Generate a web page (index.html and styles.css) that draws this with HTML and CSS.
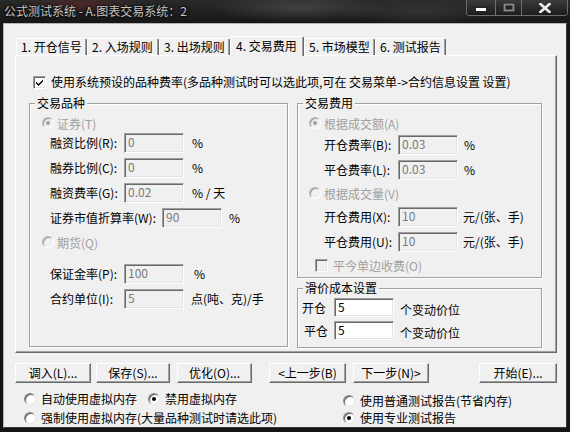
FILE: index.html
```html
<!DOCTYPE html>
<html lang="zh">
<head>
<meta charset="utf-8">
<title>公式测试系统</title>
<link rel="stylesheet" href="styles.css">
</head>
<body>
<div class="window">
  <div class="titlebar">
    <span class="title">公式测试系统 - A.图表交易系统：2</span>
    <div class="caption-btns">
      <span class="cap cap-min"><svg width="12" height="5" viewBox="0 0 12 5"><rect x="0.5" y="0.5" width="11" height="4" fill="#fff" stroke="#222"/></svg></span>
      <span class="cap cap-max"><svg width="12" height="9" viewBox="0 0 12 9"><rect x="0.5" y="0.5" width="11" height="8" fill="#222" stroke="#111"/><rect x="1.5" y="1.5" width="9" height="6" fill="none" stroke="#8a8a8a" stroke-width="2"/></svg></span>
      <span class="cap cap-close"><svg width="12" height="10" viewBox="0 0 12 10"><path d="M1.5 1 L10.5 9 M10.5 1 L1.5 9" stroke="#eaeaea" stroke-width="2.6" stroke-linecap="square"/></svg></span>
    </div>
  </div>
  <div class="client">
    <div class="tabs">
      <div class="tab t71">1. 开仓信号</div>
      <div class="tab t72">2. 入场规则</div>
      <div class="tab t71">3. 出场规则</div>
      <div class="tab sel">4. 交易费用</div>
      <div class="tab t71">5. 市场模型</div>
      <div class="tab t71">6. 测试报告</div>
    </div>
    <div class="panel">
      <div class="check-row">
        <span class="checkbox"><svg width="9" height="9" viewBox="0 0 9 9"><path d="M1 3.5 L3.5 6 L8 1.5 L8 3.5 L3.5 8 L1 5.5 Z" fill="#000"/></svg></span>
        <span class="check-text">使用系统预设的品种费率(多品种测试时可以选此项,可在 交易菜单->合约信息设置 设置)</span>
      </div>
      <div class="groups">
        <div class="group group-left">
          <span class="group-title">交易品种</span>
          <div class="opt opt-a dis"><span class="radio dis on"></span><span class="opt-text">证券(T)</span></div>
          <div class="field f-l f1"><span class="lbl w74">融资比例(R):</span><span class="input dis">0</span><span class="unit u8">%</span></div>
          <div class="field f-l f2"><span class="lbl w74">融券比例(C):</span><span class="input dis">0</span><span class="unit u8">%</span></div>
          <div class="field f-l f2"><span class="lbl w74">融资费率(G):</span><span class="input dis">0.02</span><span class="unit u8">% / 天</span></div>
          <div class="field f-l f2"><span class="lbl w112">证券市值折算率(W):</span><span class="input dis">90</span><span class="unit u7">%</span></div>
          <div class="opt opt-b dis"><span class="radio dis"></span><span class="opt-text">期货(Q)</span></div>
          <div class="field f-l f5"><span class="lbl w74">保证金率(P):</span><span class="input dis">100</span><span class="unit u10">%</span></div>
          <div class="field f-l f2"><span class="lbl w74">合约单位(I):</span><span class="input dis">5</span><span class="unit u7">点(吨、克)/手</span></div>
        </div>
        <div class="right-col">
          <div class="group group-fee">
            <span class="group-title">交易费用</span>
            <div class="opt opt-r dis"><span class="radio dis on"></span><span class="opt-text">根据成交额(A)</span></div>
            <div class="field f-r r1"><span class="lbl w74">开仓费率(B):</span><span class="input dis">0.03</span><span class="unit u6">%</span></div>
            <div class="field f-r r2"><span class="lbl w74">平仓费率(L):</span><span class="input dis">0.03</span><span class="unit u6">%</span></div>
            <div class="opt opt-r opt-r2 dis"><span class="radio dis"></span><span class="opt-text">根据成交量(V)</span></div>
            <div class="field f-r r3"><span class="lbl w74">开仓费用(X):</span><span class="input dis">10</span><span class="unit u5">元/(张、手)</span></div>
            <div class="field f-r r2"><span class="lbl w74">平仓费用(U):</span><span class="input dis">10</span><span class="unit u5">元/(张、手)</span></div>
            <div class="opt opt-chk dis"><span class="checkbox dis"></span><span class="chk-text">平今单边收费(O)</span></div>
          </div>
          <div class="group group-slip">
            <span class="group-title">滑价成本设置</span>
            <div class="field s1"><span class="lbl w32">开仓</span><span class="input en">5</span><span class="unit u6">个变动价位</span></div>
            <div class="field s2"><span class="lbl w30">平仓</span><span class="input en">5</span><span class="unit u6">个变动价位</span></div>
          </div>
        </div>
      </div>
    </div>
    <div class="buttons">
      <span class="btn b1">调入(L)...</span>
      <span class="btn b2">保存(S)...</span>
      <span class="btn b3">优化(O)...</span>
      <span class="btn b4">&lt;上一步(B)</span>
      <span class="btn b5">下一步(N)&gt;</span>
      <span class="btn b6">开始(E)...</span>
    </div>
    <div class="bottom-opts">
      <div class="col-left">
        <div class="brow">
          <span class="radio"></span><span class="btext">自动使用虚拟内存</span>
          <span class="radio r-gap on"></span><span class="btext">禁用虚拟内存</span>
        </div>
        <div class="brow">
          <span class="radio"></span><span class="btext">强制使用虚拟内存(大量品种测试时请选此项)</span>
        </div>
      </div>
      <div class="col-right">
        <div class="brow">
          <span class="radio"></span><span class="btext">使用普通测试报告(节省内存)</span>
        </div>
        <div class="brow">
          <span class="radio on"></span><span class="btext">使用专业测试报告</span>
        </div>
      </div>
    </div>
  </div>
</div>
</body>
</html>
```

FILE: styles.css
```css
* { box-sizing: border-box; }
html, body { margin: 0; padding: 0; }
body {
  width: 570px;
  height: 432px;
  overflow: hidden;
  background: #111;
  font-family: "Noto Sans CJK SC", "Noto Sans", "Liberation Sans", sans-serif;
  font-size: 12px;
  color: #000;
}
.window {
  width: 570px;
  height: 432px;
  display: flex;
  flex-direction: column;
  background:
    radial-gradient(ellipse 90px 14px at 300px 8px, rgba(90,90,90,0.55), transparent),
    radial-gradient(ellipse 60px 10px at 80px 4px, rgba(120,40,40,0.45), transparent),
    radial-gradient(ellipse 80px 14px at 420px 12px, rgba(70,70,70,0.5), transparent),
    linear-gradient(#2a2a2a, #151515 24px, #141414);
}
.titlebar {
  height: 23px;
  display: flex;
  justify-content: space-between;
  align-items: flex-start;
  flex: none;
}
.title {
  margin: 3px 0 0 4px;
  line-height: 16px;
  color: #c6c6c6;
  font-size: 12px;
  text-shadow: 0 0 3px #000, 0 0 2px #000;
}
.caption-btns {
  display: flex;
  margin-right: 2px;
  height: 16px;
  border: 1px solid #6e6e6e;
  border-top: none;
  border-radius: 0 0 4px 4px;
  overflow: hidden;
}
.cap {
  height: 15px;
  display: flex;
  align-items: center;
  justify-content: center;
  background: linear-gradient(#3b3b3b, #1c1c1c);
}
.cap + .cap { border-left: 1px solid #6e6e6e; }
.cap-min { width: 28px; padding-top: 4px; }
.cap-max { width: 26px; }
.cap-close { width: 46px; }

.client {
  margin: 0 3px;
  height: 405px;
  flex: none;
  background: #f0f0f0;
  border: 1px solid;
  border-color: #b4b4b4 #3a3a3a #3a3a3a #b4b4b4;
  display: flex;
  flex-direction: column;
}

/* tabs */
.tabs {
  display: flex;
  align-items: flex-end;
  height: 19px;
  margin: 12px 0 0 12px;
  flex: none;
}
.tab {
  height: 17px;
  line-height: 16px;
  padding-left: 4px;
  border: 1px solid;
  border-bottom: none;
  border-color: #fff #696969 transparent #fff;
  box-shadow: inset -1px 0 #a0a0a0;
  border-radius: 2px 2px 0 0;
  white-space: nowrap;
  background: #f0f0f0;
}
.t71 { width: 71px; }
.t72 { width: 72px; }
.tab.sel {
  width: 74px;
  height: 20px;
  padding-left: 5px;
  line-height: 17px;
  margin-bottom: -1px;
  position: relative;
  z-index: 1;
}

/* panel */
.panel {
  margin-left: 11px;
  width: 542px;
  height: 298px;
  flex: none;
  border: 1px solid;
  border-color: #fff #696969 #696969 #fff;
  box-shadow: inset -1px -1px #a0a0a0;
  padding: 19px 0 0 13px;
}
.check-row {
  display: flex;
  align-items: center;
  height: 14px;
  margin-left: 4px;
}
.checkbox {
  width: 13px;
  height: 13px;
  flex: none;
  background: #fff;
  border: 1px solid;
  border-color: #a0a0a0 #fff #fff #a0a0a0;
  box-shadow: inset 1px 1px #696969, inset -1px -1px #e3e3e3;
  display: flex;
  align-items: center;
  justify-content: center;
}
.checkbox.dis { background: #f0f0f0; }
.check-text { margin-left: 5px; line-height: 14px; white-space: nowrap; }

.groups {
  display: flex;
  margin-top: 14px;
  gap: 9px;
}
.group {
  border: 1px solid #a0a0a0;
  box-shadow: inset 1px 1px #fff, 1px 1px #fff;
  display: flex;
  flex-direction: column;
}
.group-title {
  display: block;
  align-self: flex-start;
  margin: -8px 0 0 5px;
  padding: 0 2px;
  height: 14px;
  line-height: 14px;
  background: #f0f0f0;
  white-space: nowrap;
}
.group-left { width: 259px; height: 244px; }
.right-col { width: 245px; display: flex; flex-direction: column; }
.group-fee { height: 175px; }
.group-slip { height: 60px; margin-top: 10px; }

.opt {
  display: flex;
  align-items: center;
  height: 14px;
  flex: none;
}
.opt.dis { color: #a0a0a0; }
.opt-text { margin-left: 3px; white-space: nowrap; }
.opt-a { margin-top: 6px; padding-left: 12px; }
.opt-b { margin-top: 7px; padding-left: 12px; }
.opt-r { margin-top: 6px; padding-left: 11px; }
.opt-chk { margin-top: 6px; padding-left: 17px; }
.chk-text { margin-left: 5px; white-space: nowrap; }

.radio {
  width: 12px;
  height: 12px;
  flex: none;
  border-radius: 50%;
  background: #fff;
  border: 1px solid;
  border-color: #8a8a8a #e6e6e6 #e6e6e6 #8a8a8a;
  box-shadow: inset 1px 1px #5a5a5a;
  display: flex;
  align-items: center;
  justify-content: center;
}
.radio.on::after {
  content: "";
  width: 4px;
  height: 4px;
  border-radius: 50%;
  background: #000;
}
.radio.dis {
  background: #f0f0f0;
  border-color: #b8b8b8 #fff #fff #b8b8b8;
  box-shadow: inset 1px 1px #a0a0a0;
}
.radio.dis.on::after { background: #a0a0a0; }

.field {
  display: flex;
  align-items: center;
  height: 20px;
  flex: none;
}
.f-l { padding-left: 20px; }
.f1 { margin-top: 3px; }
.f2 { margin-top: 5px; }
.f5 { margin-top: 15px; }
.f-r { padding-left: 26px; }
.r1 { margin-top: 5px; }
.r2 { margin-top: 5px; }
.r3 { margin-top: 7px; }
.s1 { margin-top: 3px; padding-left: 4px; height: 19px; }
.s2 { margin-top: 4px; padding-left: 6px; height: 19px; }

.lbl { white-space: nowrap; flex: none; line-height: 14px; }
.w74 { width: 74px; }
.w112 { width: 112px; }
.w32 { width: 32px; }
.w30 { width: 30px; }

.input {
  width: 60px;
  height: 20px;
  flex: none;
  border: 1px solid;
  border-color: #a0a0a0 #fff #fff #a0a0a0;
  box-shadow: inset 1px 1px #696969, inset -1px -1px #e3e3e3;
  padding: 1px 0 0 3px;
  line-height: 14px;
  white-space: nowrap;
}
.input.dis { background: #f0f0f0; color: #7a7a7a; }
.input.en { background: #fff; color: #000; height: 19px; }
.unit { white-space: nowrap; line-height: 14px; }
.u5 { margin-left: 5px; }
.u6 { margin-left: 6px; }
.u7 { margin-left: 7px; }
.u8 { margin-left: 8px; }
.u10 { margin-left: 10px; }
.s1 .unit, .s2 .unit { margin-top: 4px; }

/* buttons */
.buttons {
  display: flex;
  margin-top: 10px;
  padding-left: 11px;
  height: 20px;
  flex: none;
}
.btn {
  height: 20px;
  flex: none;
  display: flex;
  align-items: center;
  justify-content: center;
  background: #f0f0f0;
  border: 1px solid;
  border-color: #fff #696969 #696969 #fff;
  box-shadow: inset -1px -1px #a0a0a0;
  white-space: nowrap;
  line-height: 14px;
}
.b1 { width: 76px; }
.b2 { width: 74px; margin-left: 5px; }
.b3 { width: 75px; margin-left: 7px; }
.b4 { width: 77px; margin-left: 17px; }
.b5 { width: 76px; margin-left: 7px; }
.b6 { width: 78px; margin-left: 50px; }

/* bottom options */
.bottom-opts {
  display: flex;
  margin-top: 9px;
  flex: none;
}
.col-left { padding-left: 20px; width: 339px; display: flex; flex-direction: column; gap: 5px; }
.col-right { padding-top: 2px; display: flex; flex-direction: column; gap: 3px; }
.brow { display: flex; align-items: center; height: 14px; }
.btext { margin-left: 5px; white-space: nowrap; line-height: 14px; }
.r-gap { margin-left: 11px; }
```
